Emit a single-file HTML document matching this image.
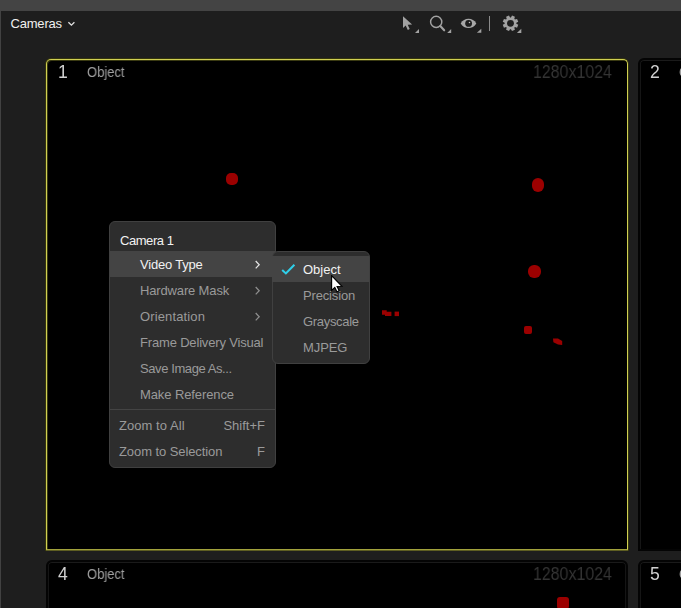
<!DOCTYPE html>
<html>
<head>
<meta charset="utf-8">
<title>Cameras</title>
<style>
html,body{margin:0;padding:0;}
body{width:681px;height:608px;overflow:hidden;background:#1e1e1e;position:relative;font-family:"Liberation Sans",sans-serif;color:#e6e6e6;}
.abs{position:absolute;}
#topbar{left:0;top:0;width:681px;height:11px;background:#444444;}
#leftedge{left:0;top:11px;width:1px;height:598px;background:#424242;}
#cams{left:10.5px;top:16px;font-size:13px;line-height:15px;color:#f0f0f0;white-space:nowrap;letter-spacing:-0.2px;}
.panel{background:#000;box-sizing:border-box;}
#p1{left:46px;top:59px;width:582px;height:491px;border:1px solid #d0d052;border-radius:5px 5px 0 0;border-bottom-color:#a2a23c;box-shadow:0 1px 0 0 #5e5e22,0 0 0 1px #34340e, inset 1px 1px 0 0 #3a3a12;}
.pd{border:2px solid #040404;border-radius:6px 6px 0 0;box-shadow:inset 0 1px 0 0 #1a1a1a,inset 1px 0 0 0 #151515,inset -1px 0 0 0 #151515;}
#p2{left:638px;top:58px;width:60px;height:493px;}
#p4{left:46px;top:560px;width:582px;height:60px;}
#p5{left:638px;top:560px;width:60px;height:60px;}
.num{font-size:17.6px;line-height:18px;color:#d0d0d0;transform:scaleX(0.95);transform-origin:0 0;will-change:transform;}
.lbl{font-size:14px;line-height:15px;color:#a0a0a0;transform:scaleX(0.928);transform-origin:0 0;will-change:transform;}
.res{font-size:17.6px;line-height:18px;color:#343434;transform:scaleX(0.906);transform-origin:0 0;white-space:nowrap;will-change:transform;}
.blob{background:#9b0000;}
.menu{background:#2d2d2d;border:1px solid #404040;box-sizing:border-box;border-radius:6px;font-size:13px;line-height:16px;color:#9a9a9a;white-space:nowrap;}
.mi{position:absolute;}
.hl{background:#444444;position:absolute;}
.w{color:#f2f2f2;}
</style>
</head>
<body>
<div id="topbar" class="abs"></div>
<div id="leftedge" class="abs"></div>
<div id="cams" class="abs">Cameras</div>
<svg class="abs" style="left:67px;top:20px" width="9" height="8" viewBox="0 0 9 8"><path d="M1.4 2.2 L4.4 5.2 L7.4 2.2" fill="none" stroke="#e0e0e0" stroke-width="1.3"/></svg>

<!-- toolbar icons -->
<svg class="abs" style="left:398px;top:12px" width="130" height="24" viewBox="0 0 130 24">
  <!-- pointer -->
  <path d="M5 4.2 L5 15.9 L7.7 13.5 L9.8 18 L11.7 17.1 L9.7 12.7 L14.1 12.5 Z" fill="#a2a2a2"/>
  <path d="M21 17 L21 21 L17 21 Z" fill="#a2a2a2"/>
  <!-- magnifier -->
  <circle cx="38.2" cy="9.9" r="5.6" fill="none" stroke="#a2a2a2" stroke-width="1.45"/>
  <path d="M42.3 14 L46.2 18.3" stroke="#a2a2a2" stroke-width="2.1" stroke-linecap="round"/>
  <path d="M53.2 17 L53.2 21 L49.2 21 Z" fill="#a2a2a2"/>
  <!-- eye -->
  <path d="M62.7 11.45 C66 5.3,75 5.3,78.3 11.45 C75 17.6,66 17.6,62.7 11.45 Z" fill="#a8a8a8"/>
  <circle cx="70.6" cy="11.45" r="3.4" fill="#1e1e1e"/>
  <circle cx="71.5" cy="10.6" r="0.75" fill="#c4c4c4"/>
  <path d="M83.3 16.7 L83.3 20.8 L78.9 20.8 Z" fill="#a2a2a2"/>
  <!-- sep -->
  <rect x="91" y="4" width="1" height="15" fill="#8a8a8a"/>
  <!-- gear -->
  <path d="M118.33 11.76 L120.25 12.81 L119.05 15.72 L116.95 15.10 L116.30 15.75 L116.92 17.85 L114.01 19.05 L112.96 17.13 L112.04 17.13 L110.99 19.05 L108.08 17.85 L108.70 15.75 L108.05 15.10 L105.95 15.72 L104.75 12.81 L106.67 11.76 L106.67 10.84 L104.75 9.79 L105.95 6.88 L108.05 7.50 L108.70 6.85 L108.08 4.75 L110.99 3.55 L112.04 5.47 L112.96 5.47 L114.01 3.55 L116.92 4.75 L116.30 6.85 L116.95 7.50 L119.05 6.88 L120.25 9.79 L118.33 10.84 Z" fill="#a2a2a2"/>
  <circle cx="112.5" cy="11.3" r="3.4" fill="#1e1e1e"/>
  <path d="M123.3 16.8 L123.3 20.9 L118.9 20.9 Z" fill="#a2a2a2"/>
</svg>

<!-- panels -->
<div id="p1" class="abs panel"></div>
<div id="p2" class="abs panel pd"></div>
<div id="p4" class="abs panel pd"></div>
<div id="p5" class="abs panel pd"></div>

<div class="abs num" style="left:58.3px;top:63px">1</div>
<div class="abs lbl" style="left:87px;top:65px">Object</div>
<div class="abs res" style="left:533.2px;top:63px">1280x1024</div>
<div class="abs num" style="left:649.8px;top:63px">2</div>
<div class="abs lbl" style="left:678.7px;top:65px">Object</div>

<div class="abs num" style="left:58.3px;top:565px">4</div>
<div class="abs lbl" style="left:87px;top:567px">Object</div>
<div class="abs res" style="left:533.2px;top:565px">1280x1024</div>
<div class="abs num" style="left:649.8px;top:565px">5</div>
<div class="abs lbl" style="left:678.7px;top:567px">Object</div>

<!-- blobs -->
<div class="abs blob" style="left:226px;top:172.5px;width:12px;height:12.5px;border-radius:5px"></div>
<div class="abs blob" style="left:532px;top:178px;width:12.4px;height:13.5px;border-radius:6px"></div>
<div class="abs blob" style="left:528px;top:265px;width:13px;height:13px;border-radius:6px"></div>
<div class="abs blob" style="left:524px;top:326px;width:8px;height:8px;border-radius:2px"></div>
<svg class="abs" style="left:550px;top:335px" width="16" height="14" viewBox="0 0 16 14"><path d="M3 3.4 L8 3.4 L12.2 6 L12.2 10 L8 9.6 L3.4 7.2 Z" fill="#9b0000"/></svg>
<svg class="abs" style="left:370px;top:300px" width="40" height="30" viewBox="0 0 40 30"><path d="M12 10.3 H16.7 V11.7 H21.4 V16.1 H15 V14.7 H12 Z" fill="#9b0000"/><rect x="24.6" y="11.6" width="4.4" height="4.5" fill="#9b0000"/></svg>
<div class="abs blob" style="left:557px;top:597px;width:12px;height:12px;border-radius:3px"></div>

<!-- main menu -->
<div class="abs menu" style="left:109px;top:221px;width:167px;height:247px;">
  <div class="hl" style="left:0;top:29px;width:165px;height:26px"></div>
  <div class="mi w" style="left:10px;top:11px;letter-spacing:-0.45px">Camera 1</div>
  <div class="mi w" style="left:30px;top:35px;letter-spacing:-0.2px">Video Type</div>
  <div class="mi" style="left:30px;top:61px;letter-spacing:-0.15px">Hardware Mask</div>
  <div class="mi" style="left:30px;top:87px;letter-spacing:0.13px">Orientation</div>
  <div class="mi" style="left:30px;top:113px;letter-spacing:-0.17px">Frame Delivery Visual</div>
  <div class="mi" style="left:30px;top:139px;letter-spacing:-0.41px">Save Image As...</div>
  <div class="mi" style="left:30px;top:165px;letter-spacing:-0.1px">Make Reference</div>
  <div class="abs" style="left:0;top:187px;width:165px;height:1px;background:#444"></div>
  <div class="mi" style="left:9px;top:196px;letter-spacing:0.05px">Zoom to All</div>
  <div class="mi" style="right:10px;top:196px">Shift+F</div>
  <div class="mi" style="left:9px;top:222px;letter-spacing:-0.08px">Zoom to Selection</div>
  <div class="mi" style="right:10px;top:222px">F</div>
  <svg class="abs" style="left:143px;top:37px" width="9" height="12" viewBox="0 0 9 12"><path d="M2.7 2 L6.2 5.7 L2.7 9.4" fill="none" stroke="#e4e4e4" stroke-width="1.25"/></svg>
  <svg class="abs" style="left:143px;top:63px" width="9" height="12" viewBox="0 0 9 12"><path d="M2.7 2 L6.2 5.7 L2.7 9.4" fill="none" stroke="#8e8e8e" stroke-width="1.25"/></svg>
  <svg class="abs" style="left:143px;top:89px" width="9" height="12" viewBox="0 0 9 12"><path d="M2.7 2 L6.2 5.7 L2.7 9.4" fill="none" stroke="#8e8e8e" stroke-width="1.25"/></svg>
</div>

<!-- submenu -->
<div class="abs menu" style="left:272px;top:251px;width:98px;height:113px;">
  <div class="hl" style="left:-1px;top:4px;width:97px;height:26px;"></div>
  <svg class="abs" style="left:7px;top:10px" width="18" height="14" viewBox="0 0 18 14"><path d="M2.2 8 L5.9 11.4 L14.4 2.7" fill="none" stroke="#2fcfe9" stroke-width="2.1"/></svg>
  <div class="mi w" style="left:30px;top:10px">Object</div>
  <div class="mi" style="left:30px;top:36px;letter-spacing:-0.16px">Precision</div>
  <div class="mi" style="left:30px;top:62px;letter-spacing:-0.32px">Grayscale</div>
  <div class="mi" style="left:30px;top:88px;letter-spacing:-0.08px">MJPEG</div>
</div>

<!-- cursor -->
<svg class="abs" style="left:331px;top:275px" width="13" height="18" viewBox="0 0 13 18">
  <path d="M0.6 0.6 L0.6 15.4 L3.8 12.4 L5.9 16.8 L8.2 15.8 L6.1 11.5 L10.9 11.3 Z" fill="#fff" stroke="#000" stroke-width="1.15" stroke-linejoin="miter"/>
</svg>
</body>
</html>
